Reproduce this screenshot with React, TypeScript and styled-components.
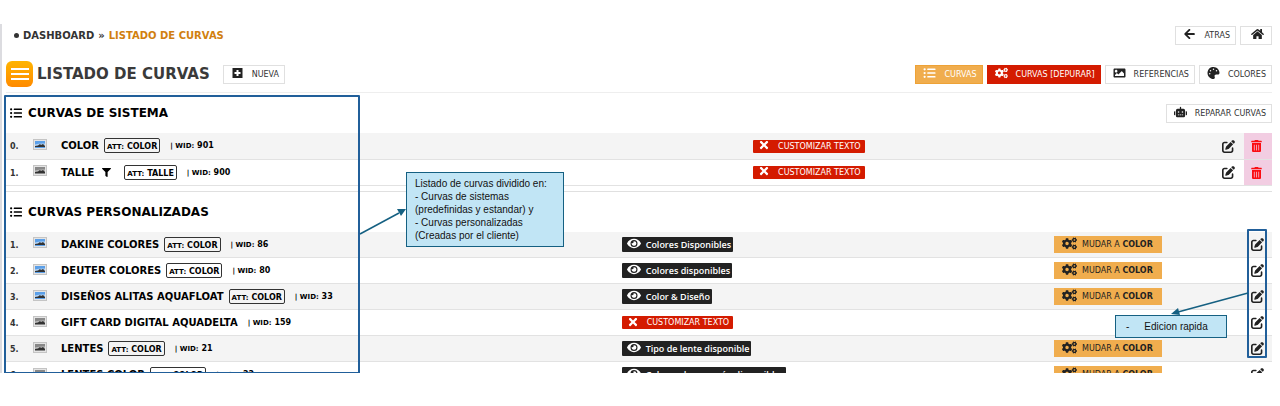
import React from "react";
import styled, { createGlobalStyle, css } from "styled-components";
import {
  FaArrowLeft,
  FaCogs,
  FaEye,
  FaFilter,
  FaHome,
  FaImage,
  FaListUl,
  FaPalette,
  FaRobot,
  FaTimes,
  FaTrashAlt,
} from "react-icons/fa";
import { FaPenToSquare } from "react-icons/fa6";

const GlobalStyle = createGlobalStyle`
  * { box-sizing: border-box; }
  body {
    margin: 0;
    background: #fff;
    color: #000;
    font-family: Verdana, "DejaVu Sans", sans-serif;
    font-size: 11px;
  }
`;

const Page = styled.div`
  position: relative;
  padding-top: 24px;
`;

const Panel = styled.main`
  height: calc(100vh - 57px);
  min-height: 320px;
  overflow: hidden;
  padding: 0 8px 0 4px;
  border-left: 2px solid #dcdce0;
`;

const Bar = styled.div<{ $height: number; $line?: boolean }>`
  display: flex;
  align-items: center;
  justify-content: space-between;
  height: ${(p) => p.$height}px;
  margin-top: ${(p) => (p.$line ? 10 : 0)}px;
  border-bottom: ${(p) => (p.$line ? "1px solid #eee" : "0")};
`;

const Group = styled.div`
  display: flex;
  align-items: center;
  gap: 4px;
`;

const Crumbs = styled.nav`
  display: flex;
  align-items: center;
  gap: 4px;
  padding-left: 8px;
  font-size: 10px;
  font-weight: bold;
  color: #333;
`;

const Bullet = styled.span`
  width: 5px;
  height: 5px;
  border-radius: 50%;
  background: #333;
`;

const CrumbLink = styled.a<{ $current?: boolean }>`
  color: ${(p) => (p.$current ? "#d17f0f" : "#333")};
  text-decoration: none;
`;

const tones = {
  plain: css`
    background: #fff;
    color: #333;
    border-color: #e0e0e0;
  `,
  orange: css`
    background: #f0ad4e;
    color: #fff;
    border-color: #eea236;
  `,
  red: css`
    background: #d41b00;
    color: #fff;
    border-color: #d41b00;
  `,
};

const Button = styled.button<{ $tone?: keyof typeof tones }>`
  display: inline-flex;
  align-items: center;
  justify-content: center;
  gap: 8px;
  min-width: 32px;
  height: 19px;
  padding: 0 5px 0 7px;
  border: 1px solid;
  font-family: inherit;
  font-size: 8px;
  white-space: nowrap;
  ${(p) => tones[p.$tone ?? "plain"]}

  svg {
    width: 13px;
    height: 12px;
    margin-top: -2px;
    color: ${(p) => (p.$tone ? "#fff" : "#222")};
  }
`;

const MenuButton = styled.button`
  display: flex;
  flex-direction: column;
  align-items: center;
  justify-content: center;
  gap: 3px;
  width: 27px;
  height: 26px;
  padding: 0;
  border: 0;
  border-radius: 6px;
  background: linear-gradient(#ffb400, #ff8a00);
`;

const MenuLine = styled.span`
  width: 18px;
  height: 2px;
  background: #fff;
`;

const Title = styled.h1`
  margin: 0 9px 0 0;
  font-size: 15px;
  color: #3a3a3a;
`;

const SectionTitle = styled.h2`
  display: flex;
  align-items: center;
  gap: 6px;
  margin: 0;
  padding-left: 4px;
  font-size: 12px;

  svg {
    width: 12px;
    height: 12px;
  }
`;

const Divider = styled.hr`
  margin: 5px 0 0;
  border: 0;
  border-top: 1px solid #e0e0e0;
`;

const Table = styled.table`
  width: 100%;
  table-layout: fixed;
  border-collapse: collapse;
`;

const Col = styled.col<{ $width?: string }>`
  width: ${(p) => p.$width ?? "auto"};
`;

const Row = styled.tr`
  height: 26px;
  border-bottom: 1px solid #e2e2e2;
  &:nth-child(odd) {
    background: #f4f4f4;
  }
`;

const Cell = styled.td<{ $align?: string; $pink?: boolean }>`
  padding: 0;
  text-align: ${(p) => p.$align ?? "left"};
  vertical-align: middle;
  white-space: nowrap;
  background: ${(p) => (p.$pink ? "#f2cde2" : "transparent")};
`;

const Index = styled.span`
  padding-left: 4px;
  font-size: 8px;
  font-weight: bold;
  color: #333;
`;

const NameLine = styled.div`
  display: flex;
  align-items: center;
  font-size: 10px;
  font-weight: bold;
`;

const Attribute = styled.span`
  height: 15px;
  margin-left: 5px;
  padding: 0 2px;
  border: 1px solid #333;
  border-radius: 2px;
  font-size: 8px;
  line-height: 15px;
`;

const Wid = styled.span`
  margin-left: 10px;
  font-size: 8px;
`;

const Small = styled.small`
  font-size: 7px;
`;

const FilterIcon = styled(FaFilter)`
  width: 9px;
  height: 9px;
  margin: 0 8px;
`;

const Tag = styled.button<{ $red?: boolean }>`
  display: inline-flex;
  align-items: center;
  gap: ${(p) => (p.$red ? 9 : 5)}px;
  height: ${(p) => (p.$red ? 13 : 15)}px;
  padding: 0 ${(p) => (p.$red ? 4 : 2)}px 0 ${(p) => (p.$red ? 6 : 5)}px;
  border: 0;
  border-radius: 1px;
  background: ${(p) => (p.$red ? "#d41b00" : "#222")};
  color: #fff;
  font-family: ${(p) => (p.$red ? "inherit" : '"Open Sans", sans-serif')};
  font-size: ${(p) => (p.$red ? 8 : 9)}px;
  font-weight: ${(p) => (p.$red ? 400 : 600)};
  vertical-align: middle;

  svg {
    width: ${(p) => (p.$red ? 10 : 14)}px;
    height: ${(p) => (p.$red ? 12 : 13)}px;
    margin-top: -2px;
  }
`;

const ChangeButton = styled.button`
  display: inline-flex;
  align-items: center;
  gap: 5px;
  height: 17px;
  padding: 0 9px 0 8px;
  border: 0;
  background: #f0ad4e;
  color: #222;
  font-family: inherit;
  font-size: 8px;
  vertical-align: middle;

  svg {
    width: 15px;
    height: 13px;
    margin-top: -2px;
  }
`;

const IconButton = styled.button<{ $danger?: boolean }>`
  display: inline-flex;
  padding: 0;
  border: 0;
  background: none;
  color: ${(p) => (p.$danger ? "#fb0d12" : "#222")};
  vertical-align: middle;

  svg {
    width: ${(p) => (p.$danger ? 11 : 13)}px;
    height: ${(p) => (p.$danger ? 12 : 13)}px;
  }
`;

const DeleteButton = styled(IconButton)`
  margin-right: 3px;
`;

const Thumb = styled.svg`
  display: block;
  width: 14px;
  height: 11px;
  margin-top: -3px;
`;

const Frame = styled.div`
  position: absolute;
  border: 2px solid #215f9a;
  border-radius: 1px;
  pointer-events: none;
`;

const SectionsFrame = styled(Frame)`
  top: 95px;
  left: 4px;
  width: 356px;
  height: 279px;
`;

const EditFrame = styled(Frame)`
  top: 229px;
  right: 13px;
  width: 20px;
  height: 129px;
`;

const Callout = styled.aside`
  position: absolute;
  border: 1px solid #156082;
  background: #c1e5f5;
  color: #111;
  font-family: "Liberation Sans", Arial, sans-serif;
  font-size: 10px;
  line-height: 13px;
  white-space: nowrap;
`;

const SectionsCallout = styled(Callout)`
  top: 172px;
  left: 406px;
  width: 158px;
  padding: 4px 8px;
`;

const EditCallout = styled(Callout)`
  display: flex;
  gap: 15px;
  top: 315px;
  right: 53px;
  width: 112px;
  padding: 4px 10px;
`;

const Arrow = styled.svg`
  position: absolute;
  pointer-events: none;
`;

const SectionsArrow = styled(Arrow)`
  top: 206px;
  left: 359px;
`;

const EditArrow = styled(Arrow)`
  top: 290px;
  right: 31px;
`;

function PlusSquare() {
  return (
    <svg viewBox="0 0 12 12" aria-hidden="true">
      <path fill="currentColor" fillRule="evenodd" d="M1 1h10v10H1zM5 3v2H3v2h2v2h2V7h2V5H7V3z" />
    </svg>
  );
}

function Picture({ gray }: { gray?: boolean }) {
  return (
    <Thumb viewBox="0 0 14 11" aria-hidden="true">
      <rect x=".5" y=".5" width="13" height="10" fill="#e4e4e4" stroke="#c4c4c4" />
      <rect x="2" y="2" width="10" height="7" fill={gray ? "#888" : "#5b9fe8"} />
      <path d="M2 5.500q5-1.500 10-1v2.500H2z" fill={gray ? "#bbb" : "#b4d4f5"} />
      <path d="M2 8V7l3-.5 2-1.500 1 1 2-1 2 2v1z" fill="#333" />
    </Thumb>
  );
}

type Curve = {
  index: number;
  name: string;
  wid: number;
  att?: string;
  label?: string;
  gray?: boolean;
  filter?: boolean;
};

const systemCurves: Curve[] = [
  { index: 0, name: "COLOR", att: "COLOR", wid: 901 },
  { index: 1, name: "TALLE", att: "TALLE", wid: 900, gray: true, filter: true },
];

const customCurves: Curve[] = [
  { index: 1, name: "DAKINE COLORES", att: "COLOR", wid: 86, label: "Colores Disponibles" },
  { index: 2, name: "DEUTER COLORES", att: "COLOR", wid: 80, label: "Colores disponibles" },
  { index: 3, name: "DISEÑOS ALITAS AQUAFLOAT", att: "COLOR", wid: 33, label: "Color & Diseño" },
  { index: 4, name: "GIFT CARD DIGITAL AQUADELTA", wid: 159, gray: true },
  { index: 5, name: "LENTES", att: "COLOR", wid: 21, label: "Tipo de lente disponible", gray: true },
  { index: 6, name: "LENTES COLOR", att: "COLOR", wid: 22, label: "Colores de armazón disponibles", gray: true },
];

function CurveTable({ curves, system }: { curves: Curve[]; system?: boolean }) {
  return (
    <Table>
      <colgroup>
        <Col $width="27px" />
        <Col $width="28px" />
        <Col />
        <Col $width={system ? "36.25%" : "34.15%"} />
        {!system && <Col $width="188px" />}
        <Col $width={system ? "32px" : "30px"} />
        {system && <Col $width="28px" />}
      </colgroup>
      <tbody>
        {curves.map((c) => (
          <Row key={c.index}>
            <Cell>
              <Index>{c.index}.</Index>
            </Cell>
            <Cell>
              <Picture gray={c.gray} />
            </Cell>
            <Cell>
              <NameLine>
                {c.name}
                {c.filter && <FilterIcon />}
                {c.att && (
                  <Attribute>
                    <Small>ATT:</Small> {c.att}
                  </Attribute>
                )}
                <Wid>
                  <Small>| WID:</Small> {c.wid}
                </Wid>
              </NameLine>
            </Cell>
            <Cell>
              {c.label ? (
                <Tag type="button">
                  <FaEye />
                  {c.label}
                </Tag>
              ) : (
                <Tag type="button" $red>
                  <FaTimes />
                  CUSTOMIZAR TEXTO
                </Tag>
              )}
            </Cell>
            {!system && (
              <Cell>
                {c.att && (
                  <ChangeButton type="button">
                    <FaCogs />
                    <span>
                      MUDAR A <b>COLOR</b>
                    </span>
                  </ChangeButton>
                )}
              </Cell>
            )}
            <Cell $align="center">
              <IconButton type="button" aria-label={`Editar ${c.name}`}>
                <FaPenToSquare />
              </IconButton>
            </Cell>
            {system && (
              <Cell $align="center" $pink>
                <DeleteButton type="button" $danger aria-label={`Eliminar ${c.name}`}>
                  <FaTrashAlt />
                </DeleteButton>
              </Cell>
            )}
          </Row>
        ))}
      </tbody>
    </Table>
  );
}

export default function App() {
  return (
    <Page>
      <GlobalStyle />
      <Panel>
        <Bar $height={22}>
          <Crumbs>
            <Bullet />
            <CrumbLink href="#dashboard">DASHBOARD</CrumbLink>
            <span>»</span>
            <CrumbLink href="#curvas" $current>
              LISTADO DE CURVAS
            </CrumbLink>
          </Crumbs>
          <Group>
            <Button type="button">
              <FaArrowLeft />
              ATRAS
            </Button>
            <Button type="button" aria-label="Inicio">
              <FaHome />
            </Button>
          </Group>
        </Bar>
        <Bar $height={37} $line>
          <Group>
            <MenuButton type="button" aria-label="Menú">
              <MenuLine />
              <MenuLine />
              <MenuLine />
            </MenuButton>
            <Title>LISTADO DE CURVAS</Title>
            <Button type="button">
              <PlusSquare />
              NUEVA
            </Button>
          </Group>
          <Group>
            <Button type="button" $tone="orange">
              <FaListUl />
              CURVAS
            </Button>
            <Button type="button" $tone="red">
              <FaCogs />
              CURVAS [DEPURAR]
            </Button>
            <Button type="button">
              <FaImage />
              REFERENCIAS
            </Button>
            <Button type="button">
              <FaPalette />
              COLORES
            </Button>
          </Group>
        </Bar>
        <Bar $height={40}>
          <SectionTitle>
            <FaListUl />
            CURVAS DE SISTEMA
          </SectionTitle>
          <Button type="button">
            <FaRobot />
            REPARAR CURVAS
          </Button>
        </Bar>
        <CurveTable curves={systemCurves} system />
        <Divider />
        <Bar $height={40}>
          <SectionTitle>
            <FaListUl />
            CURVAS PERSONALIZADAS
          </SectionTitle>
        </Bar>
        <CurveTable curves={customCurves} />
      </Panel>
      <SectionsFrame />
      <EditFrame />
      <SectionsArrow width="48" height="30" viewBox="0 0 48 30" aria-hidden="true">
        <path d="M1 28 40 7" stroke="#156082" strokeWidth="1.5" />
        <path d="m47 3-5 7-4-7z" fill="#156082" />
      </SectionsArrow>
      <EditArrow width="80" height="28" viewBox="0 0 80 28" aria-hidden="true">
        <path d="M79 3 9 22" stroke="#156082" strokeWidth="1.5" />
        <path d="m2 24 7-6 2 7z" fill="#156082" />
      </EditArrow>
      <SectionsCallout>
        Listado de curvas dividido en:
        <br />- Curvas de sistemas
        <br />
        (predefinidas y estandar) y
        <br />- Curvas personalizadas
        <br />
        (Creadas por el cliente)
      </SectionsCallout>
      <EditCallout>
        <span>-</span>
        <span>Edicion rapida</span>
      </EditCallout>
    </Page>
  );
}
